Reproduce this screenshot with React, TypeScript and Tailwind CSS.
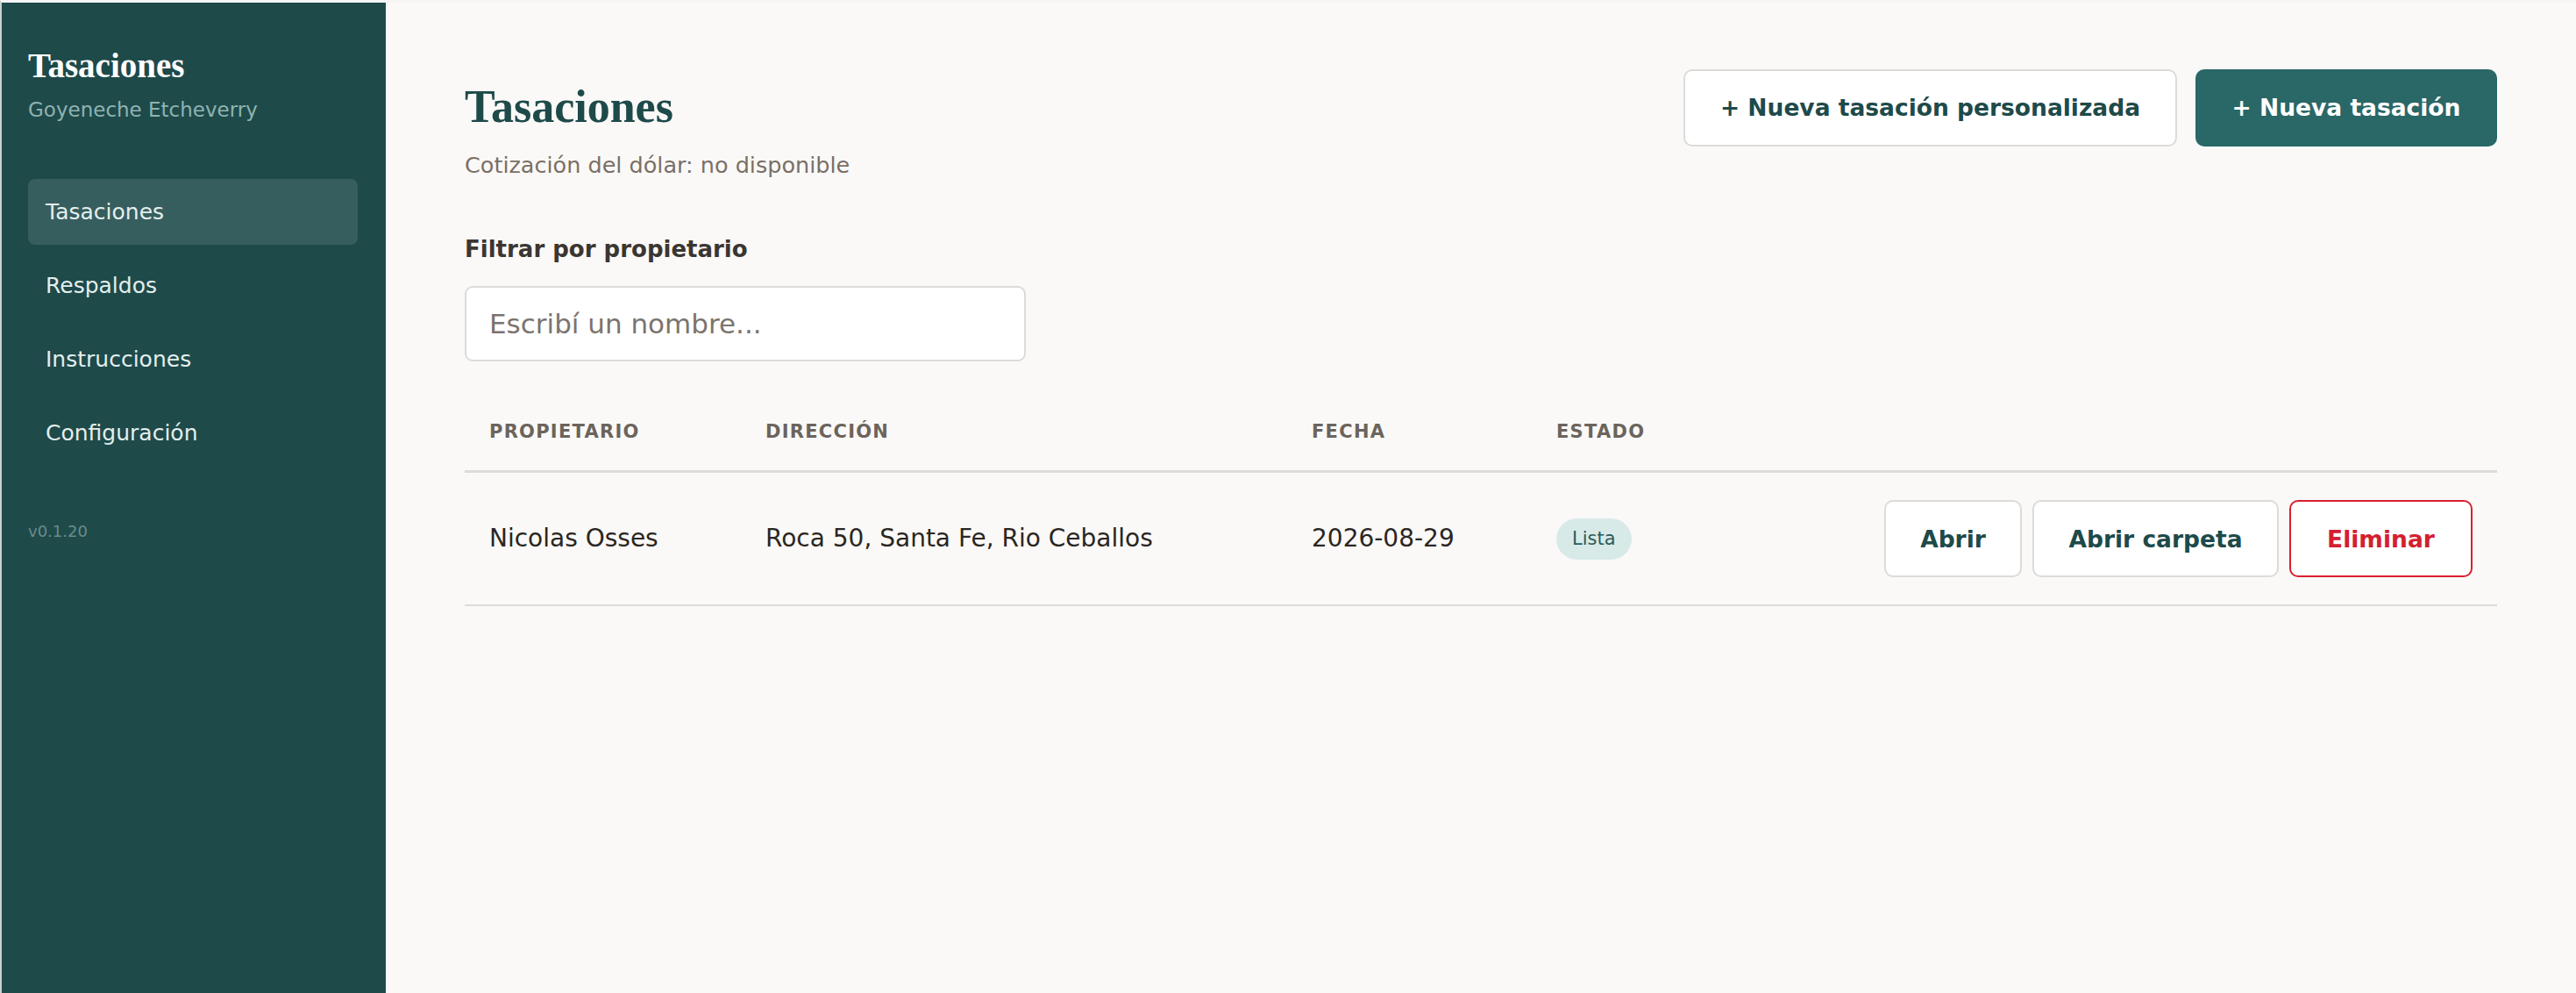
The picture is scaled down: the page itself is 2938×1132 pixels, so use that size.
import React from "react";

const serif = "font-['Liberation_Serif','Times_New_Roman',serif]";

const navItems = ["Tasaciones", "Respaldos", "Instrucciones", "Configuración"];

const Sidebar = () => (
  <aside className="flex w-[438px] shrink-0 flex-col bg-[#1e4a4a] pt-[48px] pr-[32px] pl-[30px]">
    <h1 className={`${serif} text-[39px] leading-[48px] font-bold text-white`}>
      Tasaciones
    </h1>
    <p className="mt-[8px] text-[23px] leading-[36px] text-[#8fb3b0]">
      Goyeneche Etcheverry
    </p>
    <nav className="mt-[61px] flex flex-col gap-[9px]">
      {navItems.map((item, i) => (
        <a
          key={item}
          className={`flex h-[75px] items-center rounded-[8px] px-5 text-[25px] text-[#e4eeed] ${
            i === 0 ? "bg-[#375e5e]" : ""
          }`}
        >
          {item}
        </a>
      ))}
    </nav>
    <p className="mt-[60px] text-[18px] leading-[30px] text-[#6b8b8a]">v0.1.20</p>
  </aside>
);

const OutlineButton = ({
  children,
  danger = false,
  className = "",
}: {
  children: React.ReactNode;
  danger?: boolean;
  className?: string;
}) => (
  <button
    className={`flex h-[88px] items-center justify-center rounded-[10px] border-2 bg-white text-[26.5px] font-bold ${
      danger
        ? "border-[#d9202f] text-[#d42030]"
        : "border-[#dddbd8] text-[#1e4a4a]"
    } ${className}`}
  >
    {children}
  </button>
);

export default function App() {
  return (
    <div className="flex h-screen border-t-[3px] border-l-2 border-t-[#f6f6f6] border-l-[#c9d0ce] font-['DejaVu_Sans','Verdana',sans-serif]">
      <Sidebar />
      <main className="flex-1 bg-[#faf9f7] px-[90px] pt-[76px]">
        <div className="flex items-start justify-between">
          <div className="pt-3">
            <h2
              className={`${serif} text-[52px] leading-[1.2] font-bold text-[#1e4a4a]`}
            >
              Tasaciones
            </h2>
            <p className="mt-[17px] text-[25.5px] leading-[36px] text-[#7a6f66]">
              Cotización del dólar: no disponible
            </p>
          </div>
          <div className="flex gap-[21px]">
            <OutlineButton className="w-[563px]">
              + Nueva tasación personalizada
            </OutlineButton>
            <button className="h-[88px] w-[344px] rounded-[10px] bg-[#2a6767] text-[26.5px] font-bold text-white">
              + Nueva tasación
            </button>
          </div>
        </div>

        <div className="mt-[60px]">
          <label className="block text-[26px] leading-[36px] font-bold text-[#3b3631]">
            Filtrar por propietario
          </label>
          <input
            placeholder="Escribí un nombre..."
            className="mt-[24px] h-[86px] w-[640px] rounded-[9px] border-2 border-[#dddbd8] bg-white px-[26px] text-[31px] text-[#2b2622] outline-none placeholder:text-[#7b746e]"
          />
        </div>

        <div className="mt-[37px]">
          <div className="grid grid-cols-[315px_623px_279px_1fr_auto] border-b-[3px] border-[#dfdcd8] text-[21px] leading-[33px] font-bold tracking-[0.06em] text-[#6b645c] uppercase">
            <div className="px-7 py-[27px]">Propietario</div>
            <div className="px-7 py-[27px]">Dirección</div>
            <div className="px-7 py-[27px]">Fecha</div>
            <div className="px-7 py-[27px]">Estado</div>
            <div className="px-7 py-[27px]" />
          </div>
          <div className="grid grid-cols-[315px_623px_279px_1fr_auto] items-center border-b-2 border-[#dfdcd8] text-[28px] text-[#2b2622]">
            <div className="px-7 py-[31px]">Nicolas Osses</div>
            <div className="px-7 py-[31px]">Roca 50, Santa Fe, Rio Ceballos</div>
            <div className="px-7 py-[31px]">2026-08-29</div>
            <div className="px-7 py-[31px]">
              <span className="inline-flex h-[47px] items-center rounded-full bg-[#d8eae8] px-[18px] text-[21px] text-[#2a5a5a]">
                Lista
              </span>
            </div>
            <div className="flex justify-end gap-[12px] px-7 py-[31px]">
              <OutlineButton className="w-[157px]">Abrir</OutlineButton>
              <OutlineButton className="w-[281px]">Abrir carpeta</OutlineButton>
              <OutlineButton danger className="w-[209px]">
                Eliminar
              </OutlineButton>
            </div>
          </div>
        </div>
      </main>
    </div>
  );
}
